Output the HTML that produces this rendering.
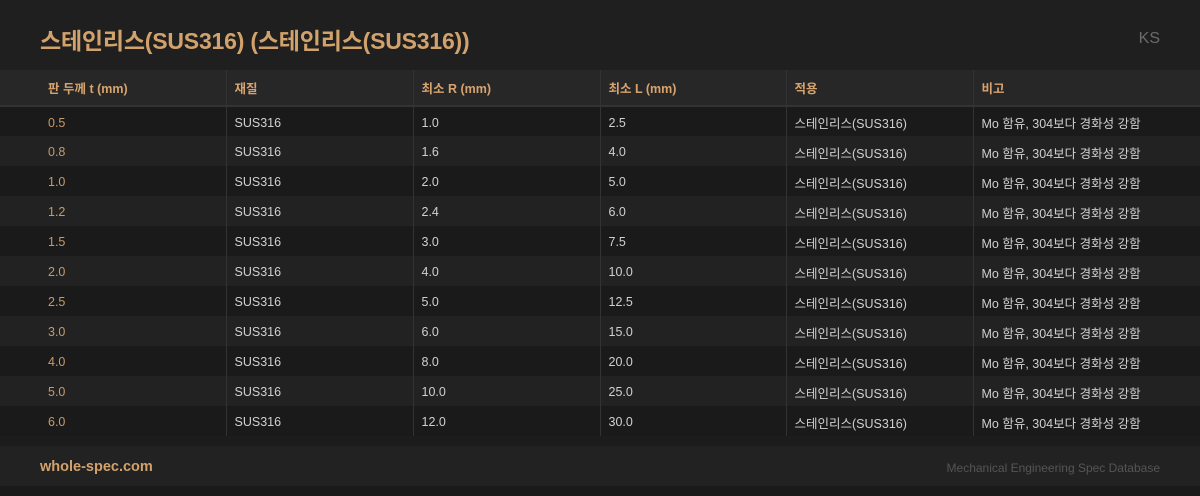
<!DOCTYPE html>
<html><head><meta charset="utf-8"><style>
*{margin:0;padding:0;box-sizing:border-box}
body{width:1200px;height:496px;background:#1c1c1c;font-family:"Liberation Sans","Noto Sans CJK KR",sans-serif;position:relative;overflow:hidden}
.top{position:absolute;left:0;top:0;width:1200px;height:70px;background:#1f1f1f}
h1{position:absolute;left:40px;top:22px;font-size:23px;font-weight:bold;color:#d2a26c;letter-spacing:-0.2px}
.ks{position:absolute;right:40px;top:30px;font-size:16px;color:#6a6a6a}
table{position:absolute;top:70px;left:0;width:1200px;border-collapse:collapse;font-size:12.5px;table-layout:fixed}
th{height:36px;background:#272727;color:#d7a36e;text-align:left;font-weight:bold;padding-left:8px;border-bottom:2px solid #333;border-left:1px solid #333}
td{height:30px;padding-left:8px;color:#d0d0d0;border-left:1px solid #333;padding-top:2px;white-space:nowrap}
th:first-child,td:first-child{padding-left:48px;border-left:none}
td:first-child{color:#c79a68}
tr:nth-child(odd) td{background:#1a1a1a}
tr:nth-child(even) td{background:#222}
.foot{position:absolute;top:446px;left:0;width:1200px;height:40px;background:#222}
.foot b{position:absolute;left:40px;top:13px;font-size:14.5px;color:#d2a26c}
.foot span{position:absolute;right:40px;top:15px;font-size:12px;color:#555}
.bot{position:absolute;top:486px;height:10px;width:1200px;background:#1a1a1a}
</style></head><body>
<div class="top"><h1>스테인리스(SUS316) (스테인리스(SUS316))</h1><div class="ks">KS</div></div>
<table>
<colgroup><col style="width:226px"><col style="width:187px"><col style="width:187px"><col style="width:186px"><col style="width:187px"><col style="width:227px"></colgroup>
<thead><tr><th>판 두께 t (mm)</th><th>재질</th><th>최소 R (mm)</th><th>최소 L (mm)</th><th>적용</th><th>비고</th></tr></thead>
<tbody>
<tr><td>0.5</td><td>SUS316</td><td>1.0</td><td>2.5</td><td>스테인리스(SUS316)</td><td>Mo 함유, 304보다 경화성 강함</td></tr>
<tr><td>0.8</td><td>SUS316</td><td>1.6</td><td>4.0</td><td>스테인리스(SUS316)</td><td>Mo 함유, 304보다 경화성 강함</td></tr>
<tr><td>1.0</td><td>SUS316</td><td>2.0</td><td>5.0</td><td>스테인리스(SUS316)</td><td>Mo 함유, 304보다 경화성 강함</td></tr>
<tr><td>1.2</td><td>SUS316</td><td>2.4</td><td>6.0</td><td>스테인리스(SUS316)</td><td>Mo 함유, 304보다 경화성 강함</td></tr>
<tr><td>1.5</td><td>SUS316</td><td>3.0</td><td>7.5</td><td>스테인리스(SUS316)</td><td>Mo 함유, 304보다 경화성 강함</td></tr>
<tr><td>2.0</td><td>SUS316</td><td>4.0</td><td>10.0</td><td>스테인리스(SUS316)</td><td>Mo 함유, 304보다 경화성 강함</td></tr>
<tr><td>2.5</td><td>SUS316</td><td>5.0</td><td>12.5</td><td>스테인리스(SUS316)</td><td>Mo 함유, 304보다 경화성 강함</td></tr>
<tr><td>3.0</td><td>SUS316</td><td>6.0</td><td>15.0</td><td>스테인리스(SUS316)</td><td>Mo 함유, 304보다 경화성 강함</td></tr>
<tr><td>4.0</td><td>SUS316</td><td>8.0</td><td>20.0</td><td>스테인리스(SUS316)</td><td>Mo 함유, 304보다 경화성 강함</td></tr>
<tr><td>5.0</td><td>SUS316</td><td>10.0</td><td>25.0</td><td>스테인리스(SUS316)</td><td>Mo 함유, 304보다 경화성 강함</td></tr>
<tr><td>6.0</td><td>SUS316</td><td>12.0</td><td>30.0</td><td>스테인리스(SUS316)</td><td>Mo 함유, 304보다 경화성 강함</td></tr>
</tbody></table>
<div class="foot"><b>whole-spec.com</b><span>Mechanical Engineering Spec Database</span></div>
<div class="bot"></div>
</body></html>
